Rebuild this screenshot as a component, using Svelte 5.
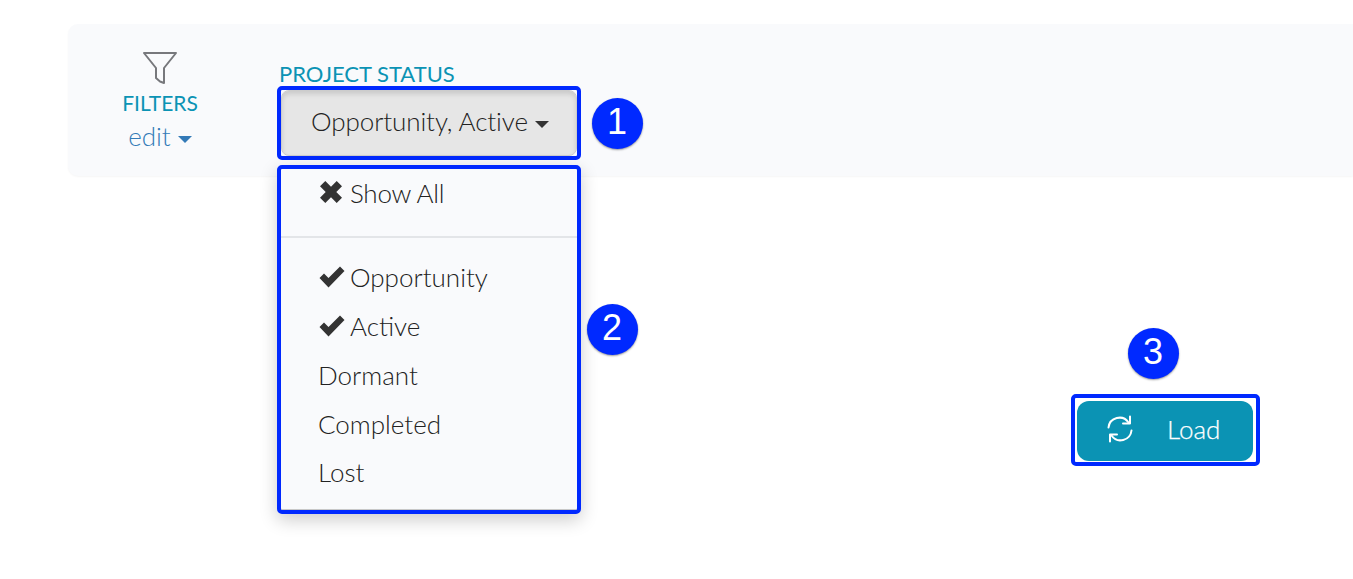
<script>
  const items = [
    { label: 'Opportunity', checked: true },
    { label: 'Active', checked: true },
    { label: 'Dormant', checked: false },
    { label: 'Completed', checked: false },
    { label: 'Lost', checked: false }
  ];
</script>

<div class="page">
  <section class="panel">
    <div class="filters">
      <svg class="funnel" width="34" height="34" viewBox="0 0 34 34" fill="none">
        <path d="M1 2h32L21 17v15l-4-1.500-4-3.500V17z" stroke="#77787c" stroke-width="2" stroke-linejoin="round"/>
      </svg>
      <div class="filters-label">FILTERS</div>
      <div class="edit">edit <span class="caret blue"></span></div>
    </div>
    <div class="status">
      <div class="status-label">PROJECT STATUS</div>
      <div class="dropdown">
        <div class="frame">
          <button class="toggle"><span class="toggle-text">Opportunity, Active</span> <span class="caret dark"></span></button>
        </div>
        <div class="menu">
          <div class="item first"><svg class="ico x" viewBox="0 0 24 24" width="24" height="24"><path d="M6.300 1 12 6.700 17.700 1 23 6.300 17.300 12 23 17.700 17.700 23 12 17.300 6.300 23 1 17.700 6.700 12 1 6.300z" fill="#333"/></svg><span class="show-all">Show All</span></div>
          <hr />
          {#each items as it}
            <div class="item">
              {#if it.checked}
                <svg class="ico" viewBox="0 0 26 22" width="26" height="22"><path d="M0.500 12 5 7.500l4.500 4.500L21 0.500 25.500 5 9.500 21.500z" fill="#333"/></svg>
              {/if}{it.label}
            </div>
          {/each}
        </div>
      </div>
    </div>
    <span class="num n1">1</span>
    <span class="num n2">2</span>
  </section>

  <div class="actions">
    <span class="num n3">3</span>
    <div class="load-frame">
      <button class="load">
        <svg width="28" height="28" viewBox="0 0 28 28" fill="none" stroke="#fff" stroke-width="2" stroke-linecap="round" stroke-linejoin="round">
          <path d="M2.500 12.500A11 11 0 0 1 22.500 7.500"/>
          <path d="M24 1.500v7h-7"/>
          <path d="M25.500 15.500A11 11 0 0 1 5.500 20.500"/>
          <path d="M4 26.500v-7h7"/>
        </svg>
        <span>Load</span>
      </button>
    </div>
  </div>
</div>

<style>
  :global(body) {
    margin: 0;
    background: #fff;
    font-family: "Lato", "Liberation Sans", sans-serif;
    font-weight: 300;
    color: #222;
  }
  .page {
    padding: 24px 0 0 68px;
    height: 555px;
    box-sizing: content-box;
    overflow: hidden;
    position: relative;
  }
  .panel {
    height: 152px;
    box-sizing: border-box;
    background: #f9fafc;
    border-radius: 10px 0 0 10px;
    box-shadow: 0 1px 2px rgba(0, 0, 0, 0.04);
    display: flex;
    align-items: flex-start;
    position: relative;
  }
  .filters {
    width: 184px;
    padding-top: 27px;
    display: flex;
    flex-direction: column;
    align-items: center;
  }
  .funnel {
    display: block;
  }
  .filters-label {
    margin-top: 6px;
    font-size: 21px;
    line-height: 24px;
    color: #0b93b4;
    font-weight: 400;
  }
  .edit {
    margin-top: 6px;
    font-size: 26px;
    line-height: 30px;
    color: #337ab7;
  }
  .caret {
    display: inline-block;
    border-left: 7px solid transparent;
    border-right: 7px solid transparent;
    vertical-align: middle;
  }
  .caret.blue {
    border-top: 7px solid #337ab7;
  }
  .caret.dark {
    border-top: 7px solid #333;
  }
  .status {
    margin-left: 25px;
    padding-top: 38px;
    position: relative;
  }
  .status-label {
    margin-left: 2px;
    font-size: 22px;
    line-height: 24px;
    color: #0b93b4;
    font-weight: 400;
  }
  .dropdown {
    position: relative;
  }
  .frame {
    width: 304px;
    height: 74px;
    box-sizing: border-box;
    border: 4px solid #0029ff;
    border-radius: 5px;
    background: #f9fafc;
  }
  .toggle {
    width: 100%;
    height: 100%;
    border: 1px solid #ccc;
    border-radius: 8px;
    background: #e6e6e6;
    box-shadow: inset 0 3px 5px rgba(0, 0, 0, 0.125);
    font: inherit;
    font-size: 26px;
    color: #222;
    padding: 0 0 5px;
  }
  .toggle-text {
    letter-spacing: -0.1px;
    margin-left: 2px;
  }
  .menu {
    position: absolute;
    top: 79px;
    left: 0;
    width: 304px;
    height: 349px;
    box-sizing: border-box;
    border: 4px solid #0029ff;
    border-radius: 5px;
    background: #f9fafc;
    box-shadow: inset 0 -1px 0 #c8c8c8, 0 6px 18px rgba(0, 0, 0, 0.2);
    padding-top: 1px;
    z-index: 2;
  }
  .item {
    height: 49px;
    line-height: 49px;
    padding-left: 37px;
    font-size: 26px;
    white-space: nowrap;
    display: flex;
    align-items: center;
  }
  .item.first {
    height: 46px;
  }
  .item:last-child {
    height: 47px;
  }
  .show-all {
    letter-spacing: -0.25px;
  }
  .ico {
    margin: 0 5px 0 1px;
    flex: none;
    position: relative;
    top: -1px;
  }
  .ico.x {
    margin-right: 7px;
  }
  hr {
    margin: 20px 0 15px;
    border: 0;
    border-top: 2px solid #e3e5e8;
  }
  .actions {
    position: absolute;
    left: 1071px;
    top: 394px;
  }
  .load-frame {
    width: 189px;
    height: 72px;
    box-sizing: border-box;
    border: 4px solid #0029ff;
    border-radius: 5px;
    padding: 3px 3px 1px 2px;
    background: #fff;
  }
  .load {
    width: 100%;
    height: 100%;
    border: 0;
    border-radius: 12px;
    background: #0b93b4;
    color: #fff;
    font: inherit;
    font-size: 26px;
    -webkit-text-stroke: 0.25px #fff;
    display: flex;
    align-items: center;
    padding: 0 0 4px 29px;
  }
  .load span {
    margin-left: 33px;
  }
  .num {
    position: absolute;
    width: 51px;
    height: 51px;
    border-radius: 50%;
    background: #0029ff;
    color: #fff;
    font-family: "Liberation Sans", sans-serif;
    font-weight: 400;
    font-size: 36px;
    line-height: 48px;
    text-align: center;
    box-shadow: 0 1px 2px rgba(0, 0, 0, 0.4);
    z-index: 3;
  }
  .n1 {
    left: 524px;
    top: 74px;
    text-indent: -1px;
  }
  .n2 {
    left: 519px;
    top: 280px;
    text-indent: -1px;
  }
  .n3 {
    left: 57px;
    top: -66px;
    text-indent: -1px;
  }
</style>
